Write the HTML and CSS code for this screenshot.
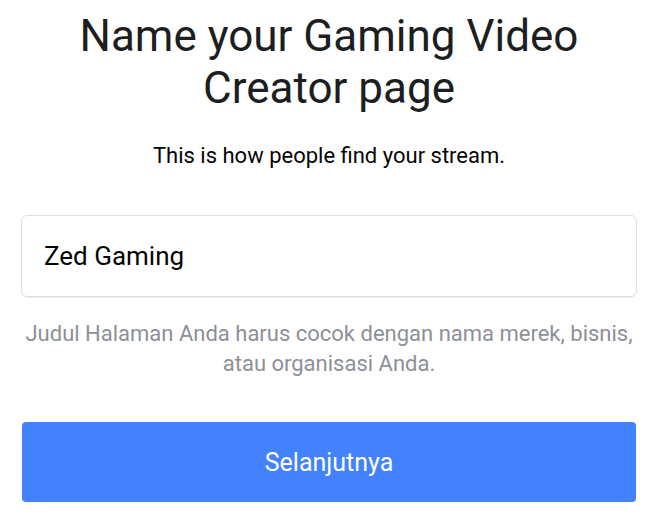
FILE: index.html
```html
<!DOCTYPE html>
<html>
<head>
<meta charset="utf-8">
<link rel="stylesheet" href="styles.css">
</head>
<body>
<main class="page">
  <h1 class="title">Name your Gaming Video Creator page</h1>
  <p class="subtitle">This is how people find your stream.</p>
  <div class="field">Zed Gaming</div>
  <p class="hint">Judul Halaman Anda harus cocok dengan nama merek, bisnis, atau organisasi Anda.</p>
  <button class="next">Selanjutnya</button>
</main>
</body>
</html>
```
FILE: styles.css
```css
html, body {
  margin: 0;
  padding: 0;
  background: #ffffff;
}
.page {
  font-family: Roboto, "Liberation Sans", sans-serif;
  display: flex;
  flex-direction: column;
  padding: 10px 21px 0 21px;
  box-sizing: border-box;
  width: 658px;
}
.title {
  margin: 0 auto;
  width: 540px;
  font-size: 44px;
  font-weight: 400;
  line-height: 52px;
  text-align: center;
  color: #1c1e21;
}
.subtitle {
  margin: 30px 0 0 0;
  font-size: 22px;
  line-height: 24px;
  text-align: center;
  color: #050505;
}
.field {
  margin-top: 47px;
  height: 82px;
  box-sizing: border-box;
  border: 1px solid #dcdde0;
  border-radius: 6px;
  box-shadow: 0 1px 1px rgba(0,0,0,0.06);
  padding: 0 22px;
  display: flex;
  align-items: center;
  font-size: 26px;
  color: #050505;
}
.hint {
  margin: 22px 0 0 0;
  font-size: 22px;
  line-height: 30px;
  text-align: center;
  color: #8d9096;
}
.next {
  margin: 43px 1px 0 1px;
  height: 80px;
  border: none;
  border-radius: 4px;
  background: #4282ff;
  color: #ffffff;
  font-family: Roboto, "Liberation Sans", sans-serif;
  font-size: 25px;
  cursor: pointer;
}
```
